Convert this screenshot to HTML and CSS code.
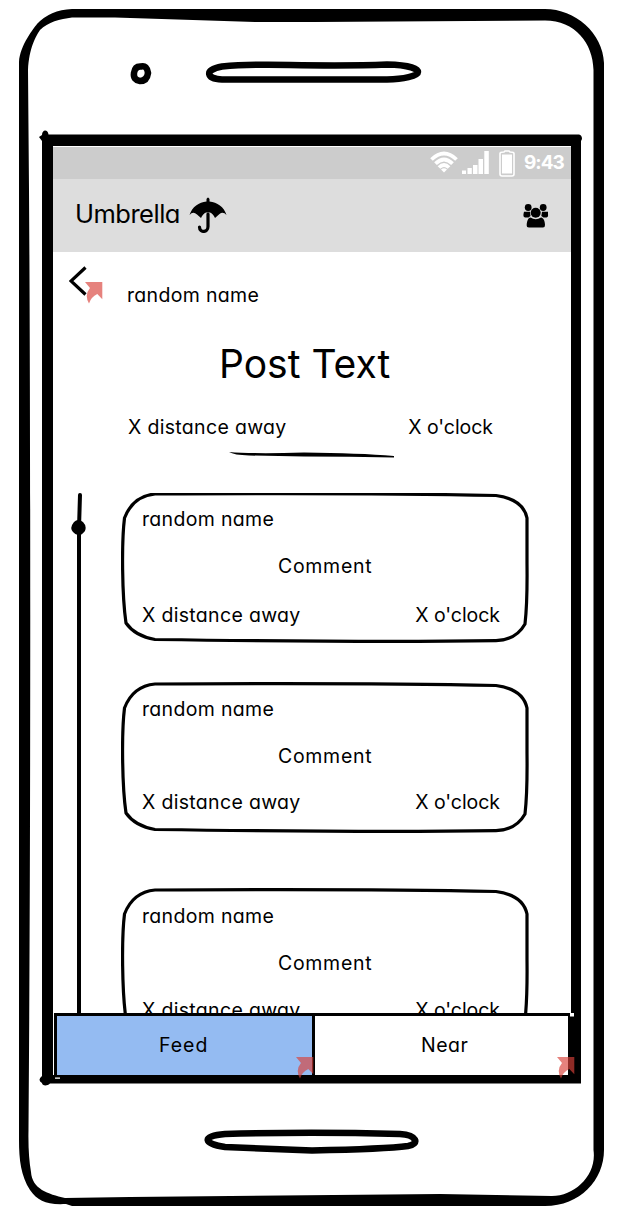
FILE: index.html
```html
<!DOCTYPE html>
<html lang="en">
<head>
<meta charset="utf-8">
<title>Umbrella</title>
<link rel="stylesheet" href="styles.css">
</head>
<body>
<svg class="defs" width="0" height="0">
  <symbol id="card-outline" viewBox="0 0 408 152">
    <path d="M34 2C120 1.500 260 1 375 3.500Q402 7 406 26V71Q406.500 110 404 132Q395 148 375 148.700Q250 150.500 34 147.500Q14 144 5 131C1 104 0.500 50 3.500 26Q12 4 34 2Z" fill="#fff" stroke="#000" stroke-width="3.200"/>
  </symbol>
  <symbol id="link" viewBox="0 0 18 22">
    <path d="M0 0H17.300V17.300L12.300 12Q6 15 4 21.500Q-1 13 5 6Z" fill="#d94139" fill-opacity=".66"/>
  </symbol>
</svg>
<div class="phone">
  <svg class="frame" viewBox="0 0 622 1217">
    <path fill-rule="evenodd" d="M19 62C20 45 34 28 37 24Q50 10 72 9H545C575 9 603 33 604 63V1150C604 1180 580 1206 545 1206H72L66 1204C46 1205 38 1201 30 1190C21 1176 19 1160 19 1140ZM28 70C29 48 36 36 40 30C48 22 60 19 72 17.500H115L255 22H315L545 20.500C575 20.500 593 43 593.500 70V1150C597 1175 575 1196 552 1196L440 1194L130 1197L65 1198C48 1194 32 1189 31 1172Q28 1155 28.500 1130C31 800 30.500 400 29 190Z"/>
    <path fill-rule="evenodd" d="M39 137L42 135C42 129 48 129 48.500 134.500H579Q582 135 582 139L581 141V1083.500H50C46 1087 42 1085 42 1083Q37 1080 42 1076V141ZM53 146H571V1075H53Z"/>
    <path d="M141 66.500Q147 65 148 73Q147 81 140 81Q133 80 134 73Q135 66 141 66.500Z" fill="none" stroke="#000" stroke-width="6.500"/>
    <path d="M222 66.500Q250 64 290 65Q350 66 387 64.500C410 65 418 69 418 72C418 76 403 79 387 79.500H222C207 79 203 70 222 66.500Z" fill="none" stroke="#000" stroke-width="6.500"/>
    <path d="M225 1134Q310 1131.500 400 1134C417 1135 420 1144 408 1146Q385 1149 312 1150.500L225 1147C204 1144 200 1136 225 1134Z" fill="none" stroke="#000" stroke-width="6.500"/>
  </svg>
  <main class="screen">
    <div class="status">
      <svg class="wifi" viewBox="0 0 28 22"><g fill="none" stroke="#fff" stroke-width="3.800"><path d="M1.500 8.500Q14-3.500 26.500 8.500"/><path d="M5.500 12.700Q14 4.200 22.500 12.700"/><path d="M9 16.500Q14 11.500 19 16.500"/></g><path d="M11 18.500Q14 16 17 18.500L14 21.500Z" fill="#fff"/></svg>
      <svg class="signal" viewBox="0 0 27 24"><path d="M0 19.500h4V23H0ZM5.500 17h4.300v6H5.500ZM11 14h4.500v9H11ZM16.500 8h4.500v15h-4.500ZM22.300 0h4.500v23h-4.500Z" fill="#fff"/></svg>
      <svg class="battery" viewBox="0 0 16 27"><path d="M1 3.500Q1 2 5 2L6 1H10L11 2Q15 2 15 3.500V24Q15 26 13 26H3Q1 26 1 24Z" fill="none" stroke="#fff" stroke-width="1.600"/><path d="M3 4.500H13V23.500H3Z" fill="#fff"/></svg>
      <span class="time">9:43</span>
    </div>
    <header class="appbar">
      <h1 class="brand">Umbrella</h1>
      <svg class="umbrella" viewBox="0 0 38 36"><path d="M0.500 18C3 10 10 5 17.500 4.500V2Q19 -1 20.500 2V4.500C28 5 35 10 37.500 18Q34 14 30.500 17L26 21Q24 16.500 21 15.500H17Q14 16.500 12 21L8 17.500Q4 14 0.500 18Z"/><path d="M19 17V29.500C19 36 10.500 36 10.500 30" fill="none" stroke="#000" stroke-width="3.200" stroke-linecap="round"/></svg>
      <svg class="people" viewBox="0 0 26 24"><circle cx="5.200" cy="3.500" r="3.400"/><circle cx="20.200" cy="3.500" r="3.400"/><path d="M1 7.700H7L7.500 12L5.500 13.500H2Q0 13 .5 10ZM25 7.700H19L18.300 12L20.500 13.500H23.500Q25.500 13 25 10Z"/><circle cx="12.700" cy="8.800" r="5"/><path d="M7.500 13.500Q12.700 17 18 13.500C21 14 22 18 22 21Q22 23.500 20 23.500H6Q3.500 23.500 3.700 21C4 17 5 14 7.500 13.500Z"/></svg>
    </header>
    <section class="post">
      <div class="post-head">
        <div class="back"><svg class="chevron" viewBox="0 0 18 30"><path d="M16.500 1.500L2 15L16.500 28.500" fill="none" stroke="#000" stroke-width="3.200"/></svg><svg class="link back-link"><use href="#link"/></svg></div>
        <span class="text name">random name</span>
      </div>
      <h2 class="title">Post Text</h2>
      <div class="post-meta"><span class="text distance">X distance away</span><span class="text clock">X o'clock</span></div>
      <svg class="rule" viewBox="0 0 166 8"><path d="M0 1Q25 3 75 1.500Q130 2 165 5V6.500Q120 5.500 75 5.500L20 4.500Q5 4 0 1Z"/></svg>
    </section>
    <section class="thread">
      <svg class="scroll" viewBox="0 0 18 522"><path d="M10 2L9 35V522" fill="none" stroke="#000" stroke-width="4" stroke-linecap="round"/><path d="M4 29Q8 25 13 29Q17 33 15 38Q9 46 3 39Q-1 35 4 29Z"/></svg>
      <div class="cards">
        <article class="card">
          <svg class="outline"><use href="#card-outline"/></svg>
          <span class="text name">random name</span>
          <span class="text comment">Comment</span>
          <div class="meta low"><span class="text distance">X distance away</span><span class="text clock">X o'clock</span></div>
        </article>
        <article class="card">
          <svg class="outline"><use href="#card-outline"/></svg>
          <span class="text name">random name</span>
          <span class="text comment">Comment</span>
          <div class="meta"><span class="text distance">X distance away</span><span class="text clock">X o'clock</span></div>
        </article>
        <article class="card last">
          <svg class="outline"><use href="#card-outline"/></svg>
          <span class="text name">random name</span>
          <span class="text comment">Comment</span>
          <div class="meta"><span class="text distance">X distance away</span><span class="text clock">X o'clock</span></div>
        </article>
      </div>
    </section>
    <nav class="tabs">
      <div class="tab feed"><span class="text feed-label">Feed</span><svg class="link tab-link"><use href="#link"/></svg></div>
      <div class="tab near"><span class="text near-label">Near</span><svg class="link tab-link"><use href="#link"/></svg></div>
    </nav>
  </main>
  <svg class="corner-marks" viewBox="0 0 622 1217"><path d="M570 1013h4v3.500h-4ZM55 1077.500h5v1.200h-5Z" fill="#fff"/></svg>
</div>
</body>
</html>
```
FILE: styles.css
```css
* { box-sizing: border-box; }
body { margin: 0; background: #fff; color: #000; font-family: Inter, "Liberation Sans", sans-serif; font-feature-settings: "cv11"; }
svg { display: block; flex: none; }
h1, h2 { margin: 0; font-weight: 400; }
.defs { position: absolute; }
.phone { position: relative; width: 622px; height: 1217px; padding: 147px 48px 0 53px; overflow: hidden; }
.frame, .corner-marks { position: absolute; inset: 0; width: 622px; height: 1217px; pointer-events: none; }
.screen { position: relative; width: 521px; height: 931px; display: flex; flex-direction: column; }
.status { width: 518px; height: 32px; background: #ccc; display: flex; align-items: flex-start; color: #fff; padding-left: 377px; }
.wifi { width: 28px; height: 22px; margin-top: 4px; }
.signal { width: 27px; height: 24px; margin: 4px 0 0 4px; }
.battery { width: 16px; height: 27px; margin: 3px 0 0 10px; }
.time { font-size: 19px; font-weight: 700; line-height: 32px; margin-left: 9px; white-space: nowrap; letter-spacing: -1px; }
.appbar { width: 518px; height: 73px; background: #ddd; display: flex; padding-left: 22px; }
.brand { width: 114px; font-size: 25.500px; line-height: 70px; white-space: nowrap; letter-spacing: -.5px; }
.umbrella { width: 38px; height: 36px; margin-top: 18px; }
.people { width: 26px; height: 24px; margin: 25px 0 0 296px; }
.text { font-size: 19.500px; line-height: 24px; white-space: nowrap; letter-spacing: .32px; }
.clock { letter-spacing: -.05px; }
.post { height: 241px; flex: none; }
.post-head { height: 78px; display: flex; }
.post-head .name { margin: 31px 0 0 23px; }
.back { position: relative; width: 51px; padding: 14px 0 0 16px; }
.chevron { width: 18px; height: 30px; }
.link { width: 18px; height: 22px; }
.back-link { position: absolute; left: 32px; top: 30px; }
.title { height: 66px; font-size: 39px; line-height: 67px; padding-left: 166px; white-space: nowrap; }
.post-meta { display: flex; justify-content: space-between; padding: 19px 81px 0 75px; }
.rule { width: 166px; height: 8px; margin: 12px 0 0 176px; }
.thread { height: 520px; flex: none; display: flex; overflow: hidden; }
.scroll { width: 18px; height: 522px; margin-left: 17px; }
.cards { width: 408px; margin-left: 33px; }
.card { position: relative; display: flex; flex-direction: column; height: 150px; margin-bottom: 40px; padding: 14px 29px 0 21px; }
.card:nth-child(2) { margin-bottom: 57px; }
.outline { position: absolute; left: 0; top: -1px; width: 408px; height: 152px; }
.last .outline { top: -2px; }
.card .text { position: relative; }
.card .comment { margin: 23px 0 0 136px; letter-spacing: .7px; }
.meta { display: flex; justify-content: space-between; margin-top: 22px; }
.meta.low { margin-top: 25px; }
.last .meta { margin-top: 23px; }
.tabs { height: 64px; width: 518px; flex: none; display: flex; border-left: 3px solid #000; border-top: 3px solid #000; background: #fff; margin-left: 1px; border-bottom: 2px solid #000; }
.tab { position: relative; height: 59px; }
.feed { width: 258px; background: #94bbf2; border-right: 3px solid #000; padding: 17px 0 0 102px; }
.near { width: 257px; border-right: 4px solid #000; padding: 17px 0 0 106px; }
.feed-label { letter-spacing: 1px; }
.near-label { letter-spacing: .5px; }
.tab-link { position: absolute; right: -2px; top: 41px; }
.near .tab-link { right: -7px; }
```
